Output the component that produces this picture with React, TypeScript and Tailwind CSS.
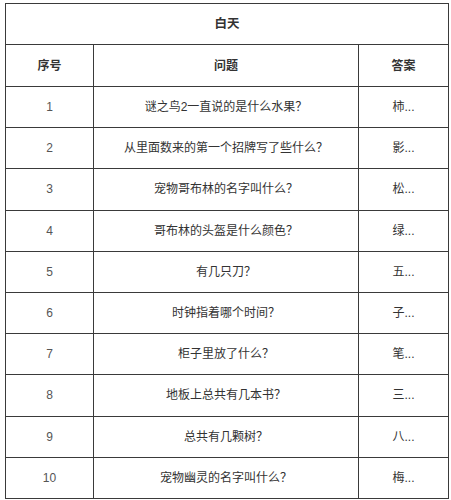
const rows: [string, string, string][] = [
  ["1", "谜之鸟2一直说的是什么水果？", "柿..."],
  ["2", "从里面数来的第一个招牌写了些什么？", "影..."],
  ["3", "宠物哥布林的名字叫什么？", "松..."],
  ["4", "哥布林的头盔是什么颜色？", "绿..."],
  ["5", "有几只刀？", "五..."],
  ["6", "时钟指着哪个时间？", "子..."],
  ["7", "柜子里放了什么？", "笔..."],
  ["8", "地板上总共有几本书？", "三..."],
  ["9", "总共有几颗树？", "八..."],
  ["10", "宠物幽灵的名字叫什么？", "梅..."],
];

export default function App() {
  return (
    <div className="w-[451px] h-[500px] bg-white overflow-hidden pt-[3px] pl-[5px] font-['Liberation_Sans','Noto_Sans_CJK_SC',sans-serif] text-[12px] text-[#333]">
      <table className="w-[443px] border-collapse table-fixed">
        <colgroup>
          <col className="w-[88px]" />
          <col className="w-[265px]" />
          <col className="w-[90px]" />
        </colgroup>
        <tbody>
          <tr className="h-[41px]">
            <td colSpan={3} className="border border-[#3a3a3a] text-center font-bold text-[12.5px]">
              白天
            </td>
          </tr>
          <tr className="h-[42px]">
            <td className="border border-[#3a3a3a] text-center font-bold">序号</td>
            <td className="border border-[#3a3a3a] text-center font-bold">问题</td>
            <td className="border border-[#3a3a3a] text-center font-bold">答案</td>
          </tr>
          {rows.map(([n, q, a]) => (
            <tr key={n} className="h-[41.2px]">
              <td className="border border-[#3a3a3a] text-center text-[#555]">{n}</td>
              <td className="border border-[#3a3a3a] text-center">{q}</td>
              <td className="border border-[#3a3a3a] text-center">{a}</td>
            </tr>
          ))}
        </tbody>
      </table>
    </div>
  );
}
